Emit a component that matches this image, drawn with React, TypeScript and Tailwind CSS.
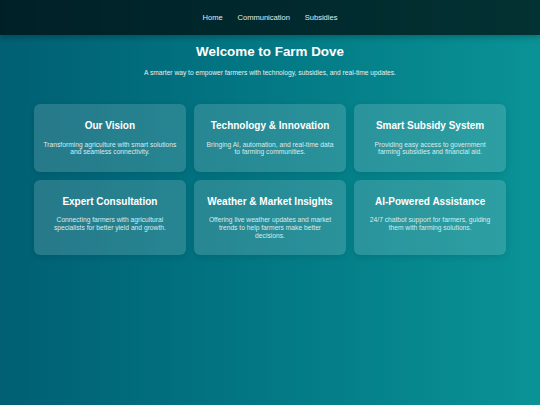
import React from "react";

const cards = [
  { t: "Our Vision", d: ["Transforming agriculture with smart solutions", "and seamless connectivity."] },
  { t: "Technology & Innovation", d: ["Bringing AI, automation, and real-time data", "to farming communities."] },
  { t: "Smart Subsidy System", d: ["Providing easy access to government", "farming subsidies and financial aid."] },
  { t: "Expert Consultation", d: ["Connecting farmers with agricultural", "specialists for better yield and growth."] },
  { t: "Weather & Market Insights", d: ["Offering live weather updates and market", "trends to help farmers make better", "decisions."] },
  { t: "AI-Powered Assistance", d: ["24/7 chatbot support for farmers, guiding", "them with farming solutions."] },
];

export default function App() {
  return (
    <div
      className="w-[540px] h-[405px] overflow-hidden bg-gradient-to-r from-[#005f73] to-[#0a9396] text-white"
      style={{ fontFamily: '"Liberation Sans", Arial, sans-serif' }}
    >
      <nav className="h-[35px] bg-[rgba(0,0,0,0.66)] flex items-center justify-center shadow-[0_2px_6px_rgba(0,0,0,0.25)]">
        <ul className="flex gap-[14.8px] text-[7.55px] text-[#e4eaea]">
          <li>Home</li>
          <li>Communication</li>
          <li>Subsidies</li>
        </ul>
      </nav>
      <div className="text-center">
        <h1 className="mt-[9px] text-[13.4px] font-bold leading-[16px]">Welcome to Farm Dove</h1>
        <p className="mt-[7.5px] text-[6.67px] text-[#e6f0f0]">
          A smarter way to empower farmers with technology, subsidies, and real-time updates.
        </p>
      </div>
      <div className="grid grid-cols-3 gap-[8.3px] px-[34px] mt-[26.5px]">
        {cards.map((c) => (
          <div
            key={c.t}
            className="rounded-[6px] bg-[rgba(255,255,255,0.15)] shadow-[0_2px_6px_rgba(0,0,0,0.1)] px-[8px] pt-[16px] pb-[16px] text-center"
          >
            <h2 className="text-[10px] font-bold leading-[11.5px] text-white">{c.t}</h2>
            <p className="mt-[9px] text-[6.7px] leading-[7.6px] text-[#dcebec] whitespace-nowrap">
              {c.d.map((line, i) => (
                <React.Fragment key={i}>
                  {i > 0 && <br />}
                  {line}
                </React.Fragment>
              ))}
            </p>
          </div>
        ))}
      </div>
    </div>
  );
}
